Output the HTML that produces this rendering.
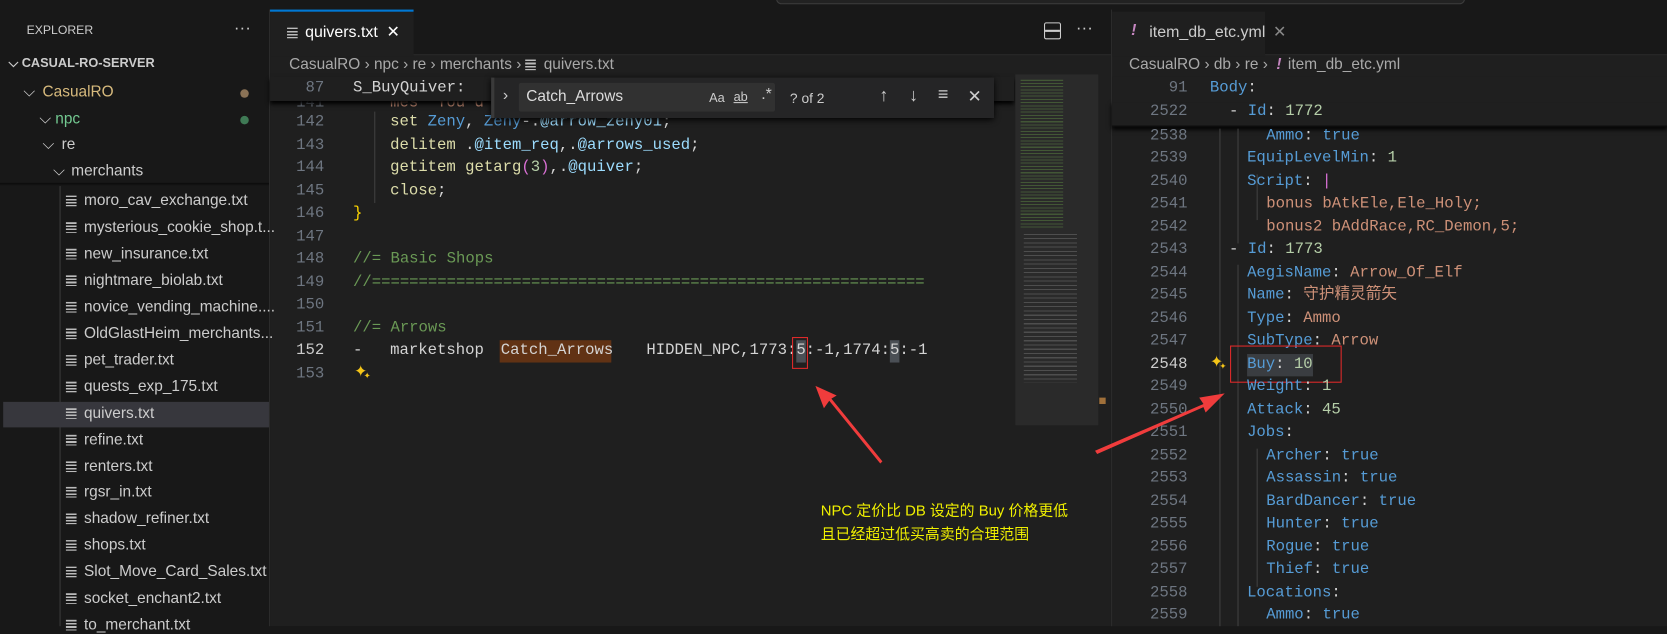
<!DOCTYPE html>
<html><head><meta charset="utf-8"><style>
*{margin:0;padding:0;box-sizing:border-box}
html,body{width:1667px;height:626px;overflow:hidden;background:#181818}
#w{position:absolute;left:0;top:0;width:1568px;height:589px;transform:scale(1.06314);transform-origin:0 0;background:#1f1f1f;font-family:"Liberation Sans","Noto Sans CJK SC",sans-serif;color:#ccc}
.a{position:absolute;white-space:pre}
.m{font-family:"Liberation Mono","Noto Sans CJK SC",monospace;font-size:14.7px;line-height:21.5px}
.ln{color:#6e7681;text-align:right;width:40px}
.k{color:#569cd6}.s{color:#ce9178}.n{color:#b5cea8}.v{color:#9cdcfe}.f{color:#dcdcaa}.c{color:#6a9955}.p{color:#da70d6}.y{color:#ffd700}.t{color:#d4d4d4}
.fi{position:absolute;left:62px;font-size:14.5px;color:#ccc}
.ic{display:inline-block;width:10px;height:10px;margin-right:7px;vertical-align:-1px;background:linear-gradient(#bbb 0 1.5px,transparent 1.5px 3px,#bbb 3px 4.5px,transparent 4.5px 6px,#bbb 6px 7.5px,transparent 7.5px 9px,#bbb 9px 10px);background-size:100% 100%}
.row{position:absolute;left:0;width:253px;height:25px;line-height:25px;font-size:14.5px}
</style></head><body><div id="w">
<div class="a" style="left:0;top:0;width:1568px;height:9px;background:#181818"></div>
<div class="a" style="left:730px;top:-6px;width:648px;height:10px;border:1px solid #3c3c3c;border-radius:5px;background:#222"></div>
<div class="a" style="left:0;top:9px;width:254px;height:580px;background:#181818;border-right:1px solid #2b2b2b"></div>
<div class="a" style="left:25px;top:23px;font-size:11.5px;color:#ccc">EXPLORER</div>
<div class="a" style="left:220px;top:18px;font-size:16px;color:#ccc">···</div>
<div class="a" style="left:8px;top:52px;font-size:12px;font-weight:bold;color:#ccc">⌵ CASUAL-RO-SERVER</div>
<div class="row" style="top:75px"><span class="a" style="left:22px;color:#ccc">⌵</span><span class="a" style="left:40px;color:#d7ba7d">CasualRO</span><span class="a" style="left:226px;top:9px;width:8px;height:8px;border-radius:4px;background:#8a7256"></span></div>
<div class="row" style="top:100px"><span class="a" style="left:37px">⌵</span><span class="a" style="left:52px;color:#73c991">npc</span><span class="a" style="left:226px;top:9px;width:8px;height:8px;border-radius:4px;background:#3f7a55"></span></div>
<div class="row" style="top:124px"><span class="a" style="left:40px">⌵</span><span class="a" style="left:58px">re</span></div>
<div class="row" style="top:149px"><span class="a" style="left:50px">⌵</span><span class="a" style="left:67px">merchants</span></div>
<div class="a" style="left:0;top:172px;width:253px;height:3px;background:linear-gradient(#0a0a0a,transparent)"></div>
<div class="a" style="left:56px;top:175px;width:1px;height:414px;background:#3a3a3a"></div>
<div class="a" style="left:3px;top:378px;width:250px;height:24px;background:#37373d"></div>
<div class="fi" style="top:181px"><span class="ic"></span>moro_cav_exchange.txt</div>
<div class="fi" style="top:206px"><span class="ic"></span>mysterious_cookie_shop.t...</div>
<div class="fi" style="top:231px"><span class="ic"></span>new_insurance.txt</div>
<div class="fi" style="top:256px"><span class="ic"></span>nightmare_biolab.txt</div>
<div class="fi" style="top:281px"><span class="ic"></span>novice_vending_machine....</div>
<div class="fi" style="top:306px"><span class="ic"></span>OldGlastHeim_merchants...</div>
<div class="fi" style="top:331px"><span class="ic"></span>pet_trader.txt</div>
<div class="fi" style="top:356px"><span class="ic"></span>quests_exp_175.txt</div>
<div class="fi" style="top:381px"><span class="ic"></span>quivers.txt</div>
<div class="fi" style="top:406px"><span class="ic"></span>refine.txt</div>
<div class="fi" style="top:431px"><span class="ic"></span>renters.txt</div>
<div class="fi" style="top:455px"><span class="ic"></span>rgsr_in.txt</div>
<div class="fi" style="top:480px"><span class="ic"></span>shadow_refiner.txt</div>
<div class="fi" style="top:505px"><span class="ic"></span>shops.txt</div>
<div class="fi" style="top:530px"><span class="ic"></span>Slot_Move_Card_Sales.txt</div>
<div class="fi" style="top:555px"><span class="ic"></span>socket_enchant2.txt</div>
<div class="fi" style="top:580px"><span class="ic"></span>to_merchant.txt</div>

<div class="a" style="left:254px;top:9px;width:791px;height:43px;background:#181818;border-bottom:1px solid #2b2b2b"></div>
<div class="a" style="left:254px;top:9px;width:135px;height:44px;background:#1f1f1f;border-top:2px solid #0078d4"></div>
<div class="a" style="left:270px;top:21px;font-size:15px;color:#fff"><span class="ic"></span>quivers.txt <span style="margin-left:4px">✕</span></div>
<div class="a" style="left:982px;top:21px;width:16px;height:16px;border:1.5px solid #ccc;border-radius:2px"></div>
<div class="a" style="left:983px;top:28px;width:14px;height:1.5px;background:#ccc"></div>
<div class="a" style="left:1012px;top:18px;font-size:16px;color:#ccc">···</div>
<div class="a" style="left:272px;top:53px;font-size:14.5px;color:#a9a9a9">CasualRO › npc › re › merchants › <span class="ic"></span><span>quivers.txt</span></div>

<div class="a m ln" style="left:265px;top:87px">141</div>
<div class="a m" style="left:367px;top:87px;color:#ce9178">mes "You d</div>
<div class="a" style="left:254px;top:72px;width:700px;height:23px;background:#1f1f1f;box-shadow:0 3px 4px #000"></div>
<div class="a m ln" style="left:265px;top:73px">87</div>
<div class="a m t" style="left:332px;top:73px">S_BuyQuiver:</div>
<div class="a" style="left:352px;top:105px;width:1px;height:86px;background:#404040"></div>
<div class="a m ln" style="left:265px;top:105px">142</div>
<div class="a m" style="left:367px;top:105px"><span class="f">set</span> <span class="k">Zeny</span><span class="t">, </span><span class="k">Zeny</span><span class="t">-.</span><span class="v">@arrow_zeny01</span><span class="t">;</span></div>
<div class="a m ln" style="left:265px;top:127px">143</div>
<div class="a m" style="left:367px;top:127px"><span class="f">delitem</span> <span class="t">.</span><span class="v">@item_req</span><span class="t">,.</span><span class="v">@arrows_used</span><span class="t">;</span></div>
<div class="a m ln" style="left:265px;top:148px">144</div>
<div class="a m" style="left:367px;top:148px"><span class="f">getitem getarg</span><span class="p">(</span><span class="n">3</span><span class="p">)</span><span class="t">,.</span><span class="v">@quiver</span><span class="t">;</span></div>
<div class="a m ln" style="left:265px;top:170px">145</div>
<div class="a m f" style="left:367px;top:170px">close<span class="t">;</span></div>
<div class="a m ln" style="left:265px;top:191px">146</div>
<div class="a m y" style="left:332px;top:191px">}</div>
<div class="a m ln" style="left:265px;top:213px">147</div>
<div class="a m ln" style="left:265px;top:234px">148</div>
<div class="a m c" style="left:332px;top:234px">//= Basic Shops</div>
<div class="a m ln" style="left:265px;top:256px">149</div>
<div class="a m c" style="left:332px;top:256px">//===========================================================</div>
<div class="a m ln" style="left:265px;top:277px">150</div>
<div class="a m ln" style="left:265px;top:299px">151</div>
<div class="a m c" style="left:332px;top:299px">//= Arrows</div>
<div class="a" style="left:470px;top:320px;width:105px;height:21px;background:#613214"></div>
<div class="a" style="left:749px;top:320px;width:9px;height:21px;background:#4a4f55"></div>
<div class="a" style="left:837px;top:320px;width:9px;height:21px;background:#4a4f55"></div>
<div class="a m ln" style="left:265px;top:320px;color:#ccc">152</div>
<div class="a m t" style="left:332px;top:320px">-</div>
<div class="a m t" style="left:367px;top:320px">marketshop</div>
<div class="a m t" style="left:471px;top:320px">Catch_Arrows</div>
<div class="a m t" style="left:608px;top:320px">HIDDEN_NPC,1773:5:-1,1774:5:-1</div>
<div class="a" style="left:745px;top:317px;width:15px;height:30px;border:1px solid #e02a2a"></div>
<div class="a m ln" style="left:265px;top:342px">153</div>
<div class="a" style="left:333px;top:340px;font-size:15px;color:#f5c518">✦</div>
<div class="a" style="left:342px;top:349px;font-size:8px;color:#f5c518">✦</div>

<div class="a" style="left:462px;top:73px;width:473px;height:38px;background:#252526;box-shadow:0 2px 6px #000;border-left:3px solid #3a3a3a"></div>
<div class="a" style="left:473px;top:81px;font-size:15px;color:#ccc">›</div>
<div class="a" style="left:488px;top:78px;width:241px;height:27px;background:#313131;border-radius:2px"></div>
<div class="a" style="left:495px;top:83px;font-size:14.5px;color:#ddd">Catch_Arrows</div>
<div class="a" style="left:667px;top:85px;font-size:12px;color:#ccc">Aa</div>
<div class="a" style="left:690px;top:84px;font-size:12px;color:#ccc;text-decoration:underline">ab</div>
<div class="a" style="left:716px;top:80px;font-size:15px;color:#ccc">.*</div>
<div class="a" style="left:743px;top:85px;font-size:13px;color:#ccc">? of 2</div>
<div class="a" style="left:827px;top:80px;font-size:17px;color:#ccc">↑</div>
<div class="a" style="left:855px;top:80px;font-size:17px;color:#ccc">↓</div>
<div class="a" style="left:882px;top:79px;font-size:17px;color:#ccc">≡</div>
<div class="a" style="left:910px;top:81px;font-size:16px;color:#ccc">✕</div>

<div class="a" style="left:955px;top:70px;width:78px;height:330px;background:#2a2a2a"></div>
<div class="a" style="left:960px;top:75px;width:40px;height:140px;background:repeating-linear-gradient(#4c6a3a 0 1px,transparent 1px 3px);opacity:.7"></div>
<div class="a" style="left:963px;top:220px;width:50px;height:140px;background:repeating-linear-gradient(#666 0 1px,transparent 1px 4px);opacity:.6"></div>
<div class="a" style="left:1034px;top:374px;width:6px;height:6px;background:#a0703a"></div>

<div class="a" style="left:1045px;top:9px;width:523px;height:580px;background:#1f1f1f;border-left:1px solid #2b2b2b"></div>
<div class="a" style="left:1046px;top:9px;width:522px;height:43px;background:#181818;border-bottom:1px solid #2b2b2b"></div>
<div class="a" style="left:1046px;top:11px;width:144px;height:42px;background:#1f1f1f"></div>
<div class="a" style="left:1064px;top:20px;font-size:15px;color:#c586c0;font-weight:bold;font-style:italic">!</div>
<div class="a" style="left:1081px;top:21px;font-size:15px;color:#ccc">item_db_etc.yml <span style="color:#888;margin-left:3px">✕</span></div>
<div class="a" style="left:1062px;top:53px;font-size:14.5px;color:#a9a9a9">CasualRO › db › re › <span style="color:#c586c0;font-weight:bold;font-style:italic;margin:0 6px 0 4px">!</span>item_db_etc.yml</div>
<div class="a" style="left:1046px;top:95px;width:522px;height:24px;box-shadow:0 3px 4px #000;background:#1f1f1f"></div>
<div class="a" style="left:1046px;top:72px;width:522px;height:24px;background:#1f1f1f"></div>
<div class="a" style="left:1046px;top:118px;width:522px;height:3px;background:linear-gradient(#0c0c0c,transparent)"></div>
<div class="a" style="left:1147px;top:121px;width:1px;height:468px;background:#404040"></div>
<div class="a" style="left:1164px;top:121px;width:1px;height:108px;background:#404040"></div>
<div class="a" style="left:1164px;top:249px;width:1px;height:340px;background:#404040"></div>
<div class="a" style="left:1182px;top:164px;width:1px;height:43px;background:#404040"></div>
<div class="a" style="left:1182px;top:422px;width:1px;height:130px;background:#404040"></div>
<div class="a m ln" style="left:1077px;top:73px">91</div><div class="a m k" style="left:1138px;top:73px">Body<span class="t">:</span></div>
<div class="a m ln" style="left:1077px;top:95px">2522</div><div class="a m t" style="left:1156px;top:95px">- <span class="k">Id</span>: <span class="n">1772</span></div>
<div class="a m ln" style="left:1077px;top:118px">2538</div><div class="a m" style="left:1191px;top:118px"><span class="k">Ammo</span><span class="t">: </span><span class="k">true</span></div>
<div class="a m ln" style="left:1077px;top:139px">2539</div><div class="a m" style="left:1173px;top:139px"><span class="k">EquipLevelMin</span><span class="t">: </span><span class="n">1</span></div>
<div class="a m ln" style="left:1077px;top:161px">2540</div><div class="a m" style="left:1173px;top:161px"><span class="k">Script</span><span class="t">: </span><span class="p">|</span></div>
<div class="a m ln" style="left:1077px;top:182px">2541</div><div class="a m s" style="left:1191px;top:182px">bonus bAtkEle,Ele_Holy;</div>
<div class="a m ln" style="left:1077px;top:204px">2542</div><div class="a m s" style="left:1191px;top:204px">bonus2 bAddRace,RC_Demon,5;</div>
<div class="a m ln" style="left:1077px;top:225px">2543</div><div class="a m t" style="left:1156px;top:225px">- <span class="k">Id</span>: <span class="n">1773</span></div>
<div class="a m ln" style="left:1077px;top:247px">2544</div><div class="a m" style="left:1173px;top:247px"><span class="k">AegisName</span><span class="t">: </span><span class="s">Arrow_Of_Elf</span></div>
<div class="a m ln" style="left:1077px;top:268px">2545</div><div class="a m" style="left:1173px;top:268px"><span class="k">Name</span><span class="t">: </span><span class="s">守护精灵箭矢</span></div>
<div class="a m ln" style="left:1077px;top:290px">2546</div><div class="a m" style="left:1173px;top:290px"><span class="k">Type</span><span class="t">: </span><span class="s">Ammo</span></div>
<div class="a m ln" style="left:1077px;top:311px">2547</div><div class="a m" style="left:1173px;top:311px"><span class="k">SubType</span><span class="t">: </span><span class="s">Arrow</span></div>
<div class="a" style="left:1173px;top:333px;width:62px;height:21px;background:#3a3d41"></div>
<div class="a m ln" style="left:1077px;top:333px;color:#ccc">2548</div><div class="a m" style="left:1173px;top:333px"><span class="k">Buy</span><span class="t">: </span><span class="n">10</span></div>
<div class="a" style="left:1157px;top:325px;width:105px;height:35px;border:1px solid #e02a2a"></div>
<div class="a" style="left:1138px;top:331px;font-size:15px;color:#f5c518">✦</div>
<div class="a" style="left:1147px;top:340px;font-size:8px;color:#f5c518">✦</div>
<div class="a m ln" style="left:1077px;top:354px">2549</div><div class="a m" style="left:1173px;top:354px"><span class="k">Weight</span><span class="t">: </span><span class="n">1</span></div>
<div class="a m ln" style="left:1077px;top:376px">2550</div><div class="a m" style="left:1173px;top:376px"><span class="k">Attack</span><span class="t">: </span><span class="n">45</span></div>
<div class="a m ln" style="left:1077px;top:397px">2551</div><div class="a m" style="left:1173px;top:397px"><span class="k">Jobs</span><span class="t">:</span></div>
<div class="a m ln" style="left:1077px;top:419px">2552</div><div class="a m" style="left:1191px;top:419px"><span class="k">Archer</span><span class="t">: </span><span class="k">true</span></div>
<div class="a m ln" style="left:1077px;top:440px">2553</div><div class="a m" style="left:1191px;top:440px"><span class="k">Assassin</span><span class="t">: </span><span class="k">true</span></div>
<div class="a m ln" style="left:1077px;top:462px">2554</div><div class="a m" style="left:1191px;top:462px"><span class="k">BardDancer</span><span class="t">: </span><span class="k">true</span></div>
<div class="a m ln" style="left:1077px;top:483px">2555</div><div class="a m" style="left:1191px;top:483px"><span class="k">Hunter</span><span class="t">: </span><span class="k">true</span></div>
<div class="a m ln" style="left:1077px;top:505px">2556</div><div class="a m" style="left:1191px;top:505px"><span class="k">Rogue</span><span class="t">: </span><span class="k">true</span></div>
<div class="a m ln" style="left:1077px;top:526px">2557</div><div class="a m" style="left:1191px;top:526px"><span class="k">Thief</span><span class="t">: </span><span class="k">true</span></div>
<div class="a m ln" style="left:1077px;top:548px">2558</div><div class="a m" style="left:1173px;top:548px"><span class="k">Locations</span><span class="t">:</span></div>
<div class="a m ln" style="left:1077px;top:569px">2559</div><div class="a m" style="left:1191px;top:569px"><span class="k">Ammo</span><span class="t">: </span><span class="k">true</span></div>

<svg class="a" style="left:0;top:0" width="1568" height="589">
<polygon points="828,436 780,377 775,384 767,363 787,372 782,375 830,434" fill="#f03c3c"/>
<polygon points="1030,424 1132,380 1128,374 1152,370 1134,388 1132,383 1032,427" fill="#f03c3c"/>
</svg>
<div class="a" style="left:772px;top:469px;font-size:14px;line-height:22px;color:#f0f000">NPC 定价比 DB 设定的 Buy 价格更低
且已经超过低买高卖的合理范围</div>
</div></body></html>
